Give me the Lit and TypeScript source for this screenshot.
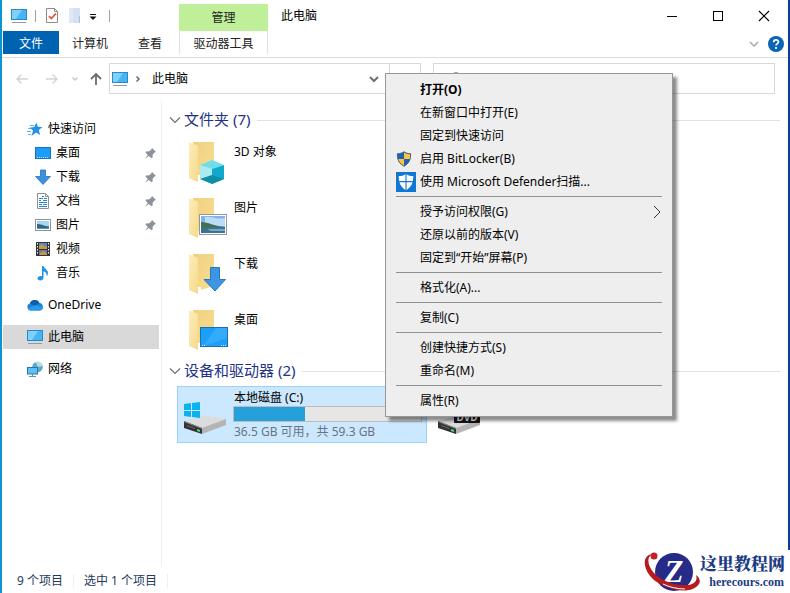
import { LitElement, html, svg, css, nothing } from "lit";
import { customElement } from "lit/decorators.js";
import { classMap } from "lit/directives/class-map.js";

const monitor = svg`
  <rect x="0.5" y="1.5" width="15" height="10" fill="#45b5f5" stroke="#2e86c4"/>
  <path d="M1 2h10L5 11H1z" fill="#7fd0fb"/>
  <path d="M1 14.5h14" stroke="#8c9aa5"/>`;

const glyphs: Record<string, unknown> = {
  pc: monitor,
  star: svg`<path d="M9.500 1.500l1.300 4.300 4.700.3-3.700 3 1.400 4.900-4-2.400-4.700 3.400 1.600-5.500L2.500 6.700l4.700-.7z" fill="#2490e6"/>
    <path d="M1 7.500h3M0 10.500h4M1 13.500h3M3 4.500h4" stroke="#63b3ee"/>`,
  desktop: svg`<rect x="0.5" y="2.500" width="15" height="11" fill="#1c9bf7" stroke="#1673bd"/>
    <path d="M2 12.500h12" stroke="#bfe3fb" stroke-dasharray="1 1"/>`,
  download: svg`<path d="M5.500 1h5v6.500h5L8 15.500 .5 7.500h5z" fill="#3a91e0" stroke="#2a72b8" stroke-width=".8"/>`,
  document: svg`<path d="M2.500.5h8l3 3v12h-11z" fill="#fff" stroke="#8b8f94"/><path d="M10.500.5v3h3" fill="none" stroke="#8b8f94"/>
    <path d="M4 7.500h2M4 5.500h4M7 3.500h2M8 7.500h4M9 5.500h3M4 9.500h8M4 11.500h3M8 11.500h4M4 13.500h8" stroke="#2582cf"/>`,
  picture: svg`<rect x="0.5" y="2.500" width="15" height="11" fill="#fff" stroke="#8b949b"/>
    <path d="M2 4h12v8H2z" fill="#a9d5f2"/><path d="M2 7c4 0 7 2 12 2.500V12H2z" fill="#33667f"/><path d="M2 11h12v1H2z" fill="#5f93b8"/>`,
  video: svg`<path d="M1 1h14v14H1z" fill="#343434"/><path d="M4 2h8v6H4z" fill="#5a86c9"/><path d="M4 9h8v5H4z" fill="#6d73bb"/>
    <path d="M4 5l3-2 3 3 2-1v3H4zM5 12l4-2 3 3v1H5z" fill="#c99a3c"/>
    <path d="M2.500 2v12M13.500 2v12" stroke="#f3f3f3" stroke-dasharray="1.500 1.500"/>`,
  music: svg`<path d="M7 1h1.500c.6 3 4.500 3.500 4.500 7 0 1.500-.6 2.500-1.300 3.300.3-2.800-.7-4.300-3.200-5V12.500C8.500 14.500 7 15.500 5.200 15.500 3.500 15.500 2.500 14.600 2.500 13.300c0-1.700 2.400-2.800 4.500-2.100z" fill="#1f93ea"/>`,
  cloud: svg`<path d="M3.500 13.500a3.600 3.600 0 0 1-.6-7A5.200 5.200 0 0 1 12.500 6a3.800 3.800 0 0 1 .3 7.500z" fill="#1a86d8"/>
    <path d="M2.900 6.500A5.200 5.200 0 0 1 12.500 6L8 9z" fill="#0f5eaa"/>
    <path d="M1 11.500C2 13 3 13.500 4 13.500h9c1.500 0 2.500-1 3-2.500L9 8z" fill="#299ae8"/>`,
  network: svg`<circle cx="10.500" cy="6" r="5.300" fill="#5fa9c9"/><path d="M8 1.500c3 1 1 3 3 4s3-1 4 0c.5-3-2-5-4.500-5z" fill="#b9dce0"/>
    <rect x=".5" y="6.500" width="10" height="6.500" fill="#5cc0f6" stroke="#2478ae"/><path d="M5.500 13v2M2 15.500h7" stroke="#6e8ea3"/>`,
  pin: svg`<path d="M10 3l4 4-1.500.5-2 2.500.2 2.500-1.200.8L6.800 11 3 14l2.800-4L3.500 7.500l.8-1.200 2.500.2 2.500-2z" fill="#8b9299"/>`,
  check: svg`<path d="M2.500.5h8l3 3v11h-11z" fill="#fff" stroke="#8c8c8c"/><path d="M10.500.5v3h3" fill="none" stroke="#8c8c8c"/>
    <path d="M5 8l2.300 2.500 4.700-5" fill="none" stroke="#e2552c" stroke-width="1.800"/>`,
  sheet: svg`<path d="M1 0h11v10l-1 5H1z" fill="#d4e1f2"/><path d="M11.500 8v7" stroke="#aebdd0"/><path d="M1 0h4v15H1z" fill="#dfe9f6"/>`,
  more: svg`<path d="M5 6.500h6" stroke="#111"/><path d="M4.500 8.500h7L8 12z" fill="#111"/>`,
  back: svg`<path d="M14 8H3M7.500 3.500L3 8l4.500 4.500" fill="none" stroke="#d2d2d2" stroke-width="1.400"/>`,
  forward: svg`<path d="M2 8h11M8.500 3.500L13 8l-4.500 4.500" fill="none" stroke="#d2d2d2" stroke-width="1.400"/>`,
  recent: svg`<path d="M5.500 6.500L8 9l2.500-2.500" fill="none" stroke="#c6c6c6" stroke-width="1.400"/>`,
  up: svg`<path d="M8 14V3M3 8l5-5 5 5" fill="none" stroke="#6b6b6b" stroke-width="1.800"/>`,
  crumb: svg`<path d="M6.500 5.500L9 8l-2.500 2.500" fill="none" stroke="#6b6b6b" stroke-width="1.500"/>`,
  drop: svg`<path d="M4 6l4 4 4-4" fill="none" stroke="#6f6f6f" stroke-width="2"/>`,
  fold: svg`<path d="M3 5.500l5 5 5-5" fill="none" stroke="#707070" stroke-width="1.200"/>`,
  collapse: svg`<path d="M4 6l4 4 4-4" fill="none" stroke="#a8a8a8" stroke-width="1.500"/>`,
  search: svg`<circle cx="8" cy="5" r="4" fill="none" stroke="#777" stroke-width="1.400"/><path d="M5 8l-4 5" stroke="#777" stroke-width="1.400"/>`,
  minimize: svg`<path d="M3 8.500h10" stroke="#000"/>`,
  maximize: svg`<rect x="3.500" y="3.500" width="9" height="9" fill="none" stroke="#000"/>`,
  close: svg`<path d="M3 3l10 10M13 3L3 13" stroke="#000" stroke-width="1.100"/>`,
  help: svg`<circle cx="8" cy="8" r="8" fill="#0a64b8"/><path d="M5.700 6.200c0-3 4.700-3 4.700-.3 0 1.800-2.300 1.700-2.300 3.700M8 11v2" fill="none" stroke="#fff" stroke-width="1.800"/>`,
  submenu: svg`<path d="M5 2l6 6-6 6" fill="none" stroke="#333"/>`,
  shield: svg`<path d="M8 .5C10 2 12.500 2.500 15 2.500c0 6-1.500 10-7 13-5.500-3-7-7-7-13C3.500 2.500 6 2 8 .5z" fill="#2a5f9e"/>
    <path d="M8 1.500v6.500H2C1.800 6.500 1.700 5 1.800 3.300 4 3.200 6 2.800 8 1.500z" fill="#1d62b5"/><path d="M8 1.500V8h6c.2-1.500.3-3 .2-4.700C12 3.200 10 2.800 8 1.500z" fill="#fcc33c"/>
    <path d="M8 8v6.700C4.500 12.700 2.600 10.500 2 8z" fill="#fcc33c"/><path d="M8 8h6c-.6 2.500-2.500 4.700-6 6.700z" fill="#1d62b5"/>
    <path d="M8 .7C10 2.200 12.500 2.700 14.700 2.700c0 6-1.500 9.500-6.700 12.500C2.800 12.200 1.300 8.700 1.300 2.700 3.500 2.700 6 2.200 8 .7z" fill="none" stroke="#5c6670" stroke-width=".7"/>`,
  defender: svg`<path d="M0 0h16v16H0z" fill="#0f78d4"/><path d="M8 1.500c1.800 1.200 3.700 1.700 5.800 1.700 0 5.300-1.300 8.800-5.800 11.300-4.500-2.500-5.800-6-5.800-11.300C4.300 3.200 6.200 2.700 8 1.500z" fill="#fff"/>
    <path d="M8 1v14M2 7.700h12" stroke="#0f78d4" stroke-width=".9"/>`,
};

const icon = (name: string, size = "s16") =>
  html`<svg class="icon ${size}" viewBox="0 0 16 16" aria-hidden="true">${glyphs[name]}</svg>`;

const folderBase = svg`
  <path d="M12 3h21v32l-16 5z" fill="url(#folderBack)"/>
  <path d="M17 36h3v5l-3 2z" fill="#fdfdfd"/>
  <path d="M8 3l9 4v36l-9-4z" fill="url(#folderFlap)"/>
  <defs>
    <linearGradient id="folderBack" x1="0" y1="0" x2="1" y2="1"><stop offset="0" stop-color="#f0d183"/><stop offset="1" stop-color="#f9dd8f"/></linearGradient>
    <linearGradient id="folderFlap" x1="0" y1="0" x2="1" y2="1"><stop offset="0" stop-color="#fdeebb"/><stop offset="1" stop-color="#f6d98a"/></linearGradient>
  </defs>`;

const driveBody = svg`
  <path d="M3 31l19-5h6l17 3-24 9z" fill="#dcdcdc"/>
  <path d="M21 38l24-9v6l-24 9z" fill="#b4b4b4"/>
  <path d="M3 31l18 7v6L3 38z" fill="#333"/>
  <path d="M3 31l18 7v1L3 32z" fill="#8a8a8a"/>
  <path d="M6 35l8 3v1l-8-3z" fill="#6c6c6c"/>
  <path d="M16 39l3 1v2l-3-1z" fill="#4fdc82"/>`;

const tiles: Record<string, unknown> = {
  cube: svg`${folderBase}
    <path d="M31 21l12 5-12 4-12-4z" fill="#6fdcea"/><path d="M19 26l12 4v15l-12-5z" fill="#a9eaf3"/>
    <path d="M31 30l12-4v14l-12 5z" fill="#10a9cc"/><path d="M19 40l12-4 12 4-12 5z" fill="#0e8ea5"/>`,
  image: svg`${folderBase}
    <rect x="18.500" y="19.500" width="27" height="20" fill="#fff" stroke="#8e989e"/>
    <path d="M20 21h24v17H20z" fill="#7fb4ea"/><path d="M24 22c6-1 12 3 20 1v8H24z" fill="#bcdcf5"/>
    <path d="M20 27c8 0 12 4 24 5v1H20z" fill="#41724f"/><path d="M20 32h24v6H20z" fill="#3c7190"/><path d="M26 34h18v2H30z" fill="#7ca9c2"/>`,
  arrow: svg`${folderBase}<path d="M29.500 16.500h9v12h6L34 40 23 28.500h6.500z" fill="#3d95e5" stroke="#2b75bc"/>`,
  screen: svg`${folderBase}
    <rect x="19.500" y="20.500" width="27" height="19" fill="#1c9ff9" stroke="#1b6fae"/><path d="M35 21h11v10L26 38h-3z" fill="#35abfb"/>
    <path d="M21 38.500h3M40 38.500h5" stroke="#d7effd" stroke-dasharray="1 1"/>`,
  system: svg`${driveBody}
    <path d="M3 14l7-1v7H3zM11 13l8-1v8h-8zM3 21h7v6l-7-1zM11 21h8v7l-8-1z" fill="#0bb3ee"/>`,
  dvd: svg`${driveBody}
    <rect x="19" y="22" width="26" height="11" rx="1" fill="#161616"/>
    <text x="32" y="31" class="dvd-label" text-anchor="middle">DVD</text>`,
};

const tileIcon = (name: string) =>
  html`<svg class="tile-icon" viewBox="0 0 52 48" aria-hidden="true">${tiles[name]}</svg>`;

interface Place { icon: string; label: string; child?: boolean; pinned?: boolean; selected?: boolean }

const places: Place[][] = [
  [
    { icon: "star", label: "快速访问" },
    { icon: "desktop", label: "桌面", child: true, pinned: true },
    { icon: "download", label: "下载", child: true, pinned: true },
    { icon: "document", label: "文档", child: true, pinned: true },
    { icon: "picture", label: "图片", child: true, pinned: true },
    { icon: "video", label: "视频", child: true },
    { icon: "music", label: "音乐", child: true },
  ],
  [{ icon: "cloud", label: "OneDrive" }],
  [{ icon: "pc", label: "此电脑", selected: true }],
  [{ icon: "network", label: "网络" }],
];

const folders = [
  { icon: "cube", label: "3D 对象" },
  { icon: "image", label: "图片" },
  { icon: "arrow", label: "下载" },
  { icon: "screen", label: "桌面" },
];

interface Command { label: string; icon?: string; big?: boolean; primary?: boolean; sub?: boolean }

const commands: Command[][] = [
  [
    { label: "打开(O)", primary: true },
    { label: "在新窗口中打开(E)" },
    { label: "固定到快速访问" },
    { label: "启用 BitLocker(B)", icon: "shield" },
    { label: "使用 Microsoft Defender扫描...", icon: "defender", big: true },
  ],
  [{ label: "授予访问权限(G)", sub: true }, { label: "还原以前的版本(V)" }, { label: "固定到“开始”屏幕(P)" }],
  [{ label: "格式化(A)..." }],
  [{ label: "复制(C)" }],
  [{ label: "创建快捷方式(S)" }, { label: "重命名(M)" }],
  [{ label: "属性(R)" }],
];

const shared = css`
  * { box-sizing: border-box; }
  button {
    font: inherit; color: inherit; background: none; border: 0; padding: 0; margin: 0;
    display: flex; align-items: center; justify-content: center;
  }
  .icon { display: block; flex: none; }
  .s16 { width: 16px; height: 16px; }
  .s20 { width: 20px; height: 20px; }
`;

@customElement("context-menu")
export class ContextMenu extends LitElement {
  static styles = [shared, css`
    :host {
      display: block; width: 288px; padding: 4px 2px; background: #eee;
      border: 1px solid #979797; box-shadow: 4px 4px 3px rgba(0, 0, 0, 0.45);
    }
    .group + .group::before {
      content: ""; display: block; height: 1px; margin: 3px 8px; background: #919191;
    }
    .command { width: 100%; height: 23px; justify-content: flex-start; }
    .slot { width: 32px; padding-left: 8px; display: flex; }
    .primary { font-weight: 700; }
    .label { flex: 1; text-align: left; white-space: nowrap; }
    .arrow { margin-right: 5px; }
  `];

  render() {
    return html`${commands.map((group) => html`
      <div class="group" role="group">
        ${group.map((c) => html`
          <button role="menuitem" class=${classMap({ command: true, primary: !!c.primary })}>
            <span class="slot">${c.icon ? icon(c.icon, c.big ? "s20" : "s16") : nothing}</span>
            <span class="label">${c.label}</span>
            ${c.sub ? html`<span class="arrow">${icon("submenu")}</span>` : nothing}
          </button>`)}
      </div>`)}`;
  }
}

@customElement("site-mark")
export class SiteMark extends LitElement {
  static styles = css`
    :host {
      display: flex; width: 148px; height: 43px; background: #fff; color: #1d3c84;
    }
    .emblem { flex: none; width: 58px; height: 43px; }
    .z { font: italic 700 31px "Liberation Serif", serif; fill: #fff; }
    .words { display: flex; flex-direction: column; align-items: flex-end; white-space: nowrap; }
    .name { font: 900 17px/25px "Noto Serif CJK SC", "Noto Sans CJK SC", sans-serif; }
    .site { font: 700 12px/14px "Liberation Serif", serif; padding-right: 1px; }
  `;

  render() {
    return html`
      <svg class="emblem" viewBox="0 0 58 43" aria-hidden="true">
        <circle cx="32" cy="22" r="19" fill="#252b86"/>
        <text class="z" x="32" y="32" text-anchor="middle">Z</text>
        <path d="M10 4C-3 6 2 27 20 35c14 7 31 8 37-1 2-3 0-7-3-9 2 6-2 9-8 10-12 1-25-3-34-12C6 16 4 8 10 4z" fill="#b51c20"/>
        <circle cx="12" cy="6" r="3.500" fill="#c22224"/>
        <path d="M21 34c6 3 14 5 22 5" fill="none" stroke="#fff" stroke-width="1"/>
      </svg>
      <div class="words"><span class="name">这里教程网</span><span class="site">herecours.com</span></div>`;
  }
}

@customElement("app-root")
export class AppRoot extends LitElement {
  static styles = [shared, css`
    :host {
      display: flex; flex-direction: column; position: relative; box-sizing: border-box;
      min-height: 100vh; background: #fff; color: #000;
      border-left: 2px solid #0a95cf; border-right: 2px solid #0a3f94;
      font: 12px/16px "Noto Sans", "Noto Sans CJK SC", sans-serif;
    }
    .ribbon {
      display: grid; grid-template-columns: 177px 89px 1fr auto; grid-template-rows: 31px 26px;
      border-bottom: 1px solid #dcdcdc;
    }
    .quick { display: flex; align-items: center; gap: 8px; padding-left: 9px; }
    .bar { width: 1px; height: 12px; background: #a0a0a0; }
    .tight { display: flex; gap: 1px; }
    .manage { margin-top: 4px; padding-top: 1px; background: #bff099; color: #222; }
    .title { padding-left: 13px; align-self: center; font: inherit; margin: 0; }
    .window { display: flex; padding-right: 1px; }
    .window button { width: 46px; height: 31px; }
    .tabs { display: flex; padding-left: 1px; height: 23px; }
    .tabs button { width: 60px; padding: 2px 0 0 2px; color: #222; }
    .tabs .file { width: 56px; padding-left: 0; background: #0063b1; color: #fff; }
    .tool { height: 23px; padding-top: 2px; color: #222; border-left: 1px solid #e2e2e2; border-right: 1px solid #e2e2e2; }
    .extras { grid-column: 4; display: flex; justify-content: flex-end; align-items: center; gap: 6px; padding-right: 4px; }
    .nav { display: flex; align-items: center; padding: 5px 13px 7px 12px; height: 43px; }
    .nav .step { width: 30px; justify-content: flex-start; }
    .nav .forward { width: 23px; }
    .nav .narrow { width: 21px; }
    .address { flex: 308; display: flex; height: 31px; border: 1px solid #d9d9d9; align-items: center; padding-left: 2px; }
    .crumbs { flex: 1; display: flex; align-items: center; gap: 2px; }
    .crumbs a { margin-left: 4px; }
    a { color: inherit; text-decoration: none; }
    .refresh { width: 31px; height: 29px; border-left: 1px solid #d9d9d9; margin-left: 7px; }
    .search { flex: 312; display: flex; height: 31px; margin-left: 12px; border: 1px solid #d9d9d9; padding: 8px 14px; }
    .search input { flex: 1; min-width: 0; border: 0; outline: 0; font: inherit; background: none; }
    .body { flex: 1; display: flex; }
    .side { width: 160px; flex: none; padding: 16px 2px 0 1px; border-right: 1px solid #f0f0f0; }
    .places { display: flex; flex-direction: column; gap: 8px; }
    .place { display: flex; align-items: center; height: 24px; padding: 0 1px 0 24px; gap: 5px; }
    .child { padding-left: 32px; }
    .selected { background: #d9d9d9; }
    .place span { flex: 1; }
    .files { flex: 1; min-width: 0; padding: 7px 8px 0 5px; }
    .heading { display: flex; align-items: center; height: 24px; margin-bottom: 3px; gap: 1px; }
    .heading h2 { margin: 0; padding-bottom: 2px; font: 400 15px/20px "Noto Sans", "Noto Sans CJK SC", sans-serif; color: #1e3287; white-space: nowrap; }
    .heading hr { flex: 1; border: 0; height: 1px; margin: 0 0 0 6px; background: #e2e2e2; }
    .grid { display: grid; grid-template-columns: 250px 250px; column-gap: 4px; padding-left: 10px; }
    .folders { grid-template-columns: 250px; }
    .tile { display: flex; height: 56px; padding: 4px; color: inherit; }
    .tile-icon { width: 52px; height: 48px; flex: none; }
    .tile .name { padding: 5px 1px; }
    .drive { height: 57px; border: 1px solid transparent; padding: 3px; }
    .drive.active { background: #cce8ff; border-color: #99d1ff; }
    .info { flex: 1; display: flex; flex-direction: column; padding-right: 1px; }
    .info label, .info span { flex: none; padding-left: 1px; line-height: 16px; }
    .info span { color: #66757f; margin-top: 2px; }
    progress {
      appearance: none; display: block; flex: none; width: 100%; height: 16px;
      border: 1px solid #bcbcbc; background: #e6e6e6;
    }
    progress::-webkit-progress-bar { background: #e6e6e6; }
    progress::-webkit-progress-value { background: #26a0da; }
    .dvd-label { font: 700 10px "Noto Sans", sans-serif; fill: #fff; }
    .status { height: 26px; display: flex; align-items: center; gap: 10px; padding: 2px 0 0 15px; color: #24395a; }
    .status i { width: 1px; height: 14px; background: #f0f0f0; }
    .menu { position: absolute; left: 383px; top: 73px; }
    .mark { position: absolute; right: -2px; bottom: 0; }
  `];

  private place(p: Place) {
    return html`<a href="#" class=${classMap({ place: true, child: !!p.child, selected: !!p.selected })}>
      ${icon(p.icon)}<span>${p.label}</span>${p.pinned ? icon("pin") : nothing}</a>`;
  }

  private heading(text: string) {
    return html`<div class="heading">${icon("fold")}<h2>${text}</h2><hr></div>`;
  }

  render() {
    return html`
      <header class="ribbon">
        <div class="quick">
          ${icon("pc")}<div class="bar"></div>
          ${icon("check")}
          <div class="tight">${icon("sheet")}${icon("more")}</div>
          <div class="bar"></div>
        </div>
        <button class="manage">管理</button>
        <h1 class="title">此电脑</h1>
        <div class="window">
          <button aria-label="最小化">${icon("minimize")}</button>
          <button aria-label="最大化">${icon("maximize")}</button>
          <button aria-label="关闭">${icon("close")}</button>
        </div>
        <div class="tabs"><button class="file">文件</button><button>计算机</button><button>查看</button></div>
        <button class="tool">驱动器工具</button>
        <div class="extras">
          <button aria-label="折叠功能区">${icon("collapse")}</button>
          <button aria-label="帮助">${icon("help")}</button>
        </div>
      </header>

      <nav class="nav">
        <button class="step" aria-label="后退">${icon("back")}</button>
        <button class="step forward" aria-label="前进">${icon("forward")}</button>
        <button class="step narrow" aria-label="最近">${icon("recent")}</button>
        <button class="step narrow" aria-label="向上">${icon("up")}</button>
        <div class="address">
          <div class="crumbs">${icon("pc")}${icon("crumb")}<a href="#">此电脑</a></div>
          <button aria-label="历史">${icon("drop")}</button>
          <button class="refresh" aria-label="刷新"></button>
        </div>
        <label class="search">${icon("search")}<input type="search" aria-label="搜索"></label>
      </nav>

      <div class="body">
        <aside class="side">
          <div class="places">${places.map((g) => html`<div>${g.map((p) => this.place(p))}</div>`)}</div>
        </aside>
        <main class="files">
          ${this.heading("文件夹 (7)")}
          <div class="grid folders">
            ${folders.map((f) => html`<a class="tile" href="#">${tileIcon(f.icon)}<span class="name">${f.label}</span></a>`)}
          </div>
          ${this.heading("设备和驱动器 (2)")}
          <div class="grid">
            <div class="tile drive active">
              ${tileIcon("system")}
              <div class="info">
                <label for="usage">本地磁盘 (C:)</label>
                <progress id="usage" max="100" value="38"></progress>
                <span>36.5 GB 可用，共 59.3 GB</span>
              </div>
            </div>
            <div class="tile drive">${tileIcon("dvd")}</div>
          </div>
        </main>
      </div>

      <footer class="status"><span>9 个项目</span><i></i><span>选中 1 个项目</span><i></i></footer>
      <context-menu class="menu" role="menu"></context-menu>
      <site-mark class="mark"></site-mark>`;
  }
}
